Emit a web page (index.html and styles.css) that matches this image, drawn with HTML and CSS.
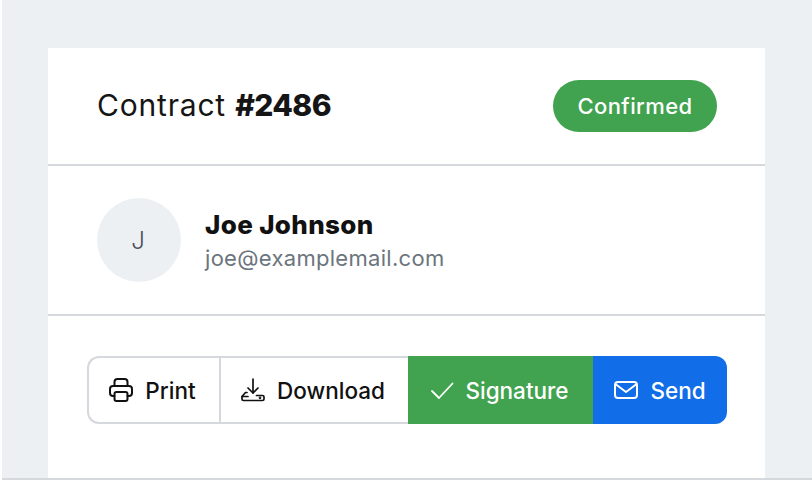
FILE: index.html
```html
<!DOCTYPE html>
<html lang="en">
<head>
<meta charset="utf-8">
<title>Contract #2486</title>
<link rel="stylesheet" href="styles.css">
</head>
<body>
<main class="page">
  <section class="card">
    <header class="head">
      <h1 class="title">Contract <b>#2486</b></h1>
      <span class="badge">Confirmed</span>
    </header>
    <div class="user">
      <div class="avatar">J</div>
      <div class="info">
        <div class="name">Joe Johnson</div>
        <div class="email">joe@examplemail.com</div>
      </div>
    </div>
    <div class="actions">
      <div class="group">
        <button class="btn btn-print">
          <svg class="icon" viewBox="0 0 24 24" fill="none" stroke="currentColor" stroke-width="2" stroke-linejoin="round" stroke-linecap="round"><path d="M5.500 8V4a3 3 0 0 1 3-3h7a3 3 0 0 1 3 3v4"/><path d="M5.500 18H4a3 3 0 0 1-3-3v-4a3 3 0 0 1 3-3h16a3 3 0 0 1 3 3v4a3 3 0 0 1-3 3h-1.500"/><rect x="5.500" y="14" width="13" height="9" rx="2"/></svg>
          Print
        </button>
        <button class="btn btn-download">
          <svg class="icon" viewBox="0 0 24 24" fill="none" stroke="currentColor" stroke-width="1.700" stroke-linejoin="round" stroke-linecap="round"><path d="M12 1v14"/><path d="M7 10l5 5 5-5"/><path d="M6 14.500H4.500L1 18.500V21a1.500 1.500 0 0 0 1.500 1.500h19A1.500 1.500 0 0 0 23 21v-2a1.500 1.500 0 0 0-1.500-1.500H15.500"/><path d="M1 18.500h6"/><circle cx="19" cy="19.800" r=".5"/></svg>
          Download
        </button>
        <button class="btn btn-sign">
          <svg class="icon" viewBox="0 0 24 24" fill="none" stroke="currentColor" stroke-width="1.800" stroke-linejoin="round" stroke-linecap="round"><path d="M2 13l7 7L22.500 5.500"/></svg>
          Signature
        </button>
        <button class="btn btn-send">
          <svg class="icon" viewBox="0 0 24 24" fill="none" stroke="currentColor" stroke-width="2" stroke-linejoin="round" stroke-linecap="round"><rect x="1" y="4" width="22" height="16" rx="3"/><path d="M2 6.500l10 7.500 10-7.500"/></svg>
          Send
        </button>
      </div>
    </div>
  </section>
</main>
</body>
</html>
```
FILE: styles.css
```css
* { box-sizing: border-box; }
html, body { margin: 0; height: 100%; background: #fff; overflow: hidden; }
body { font-family: "Inter", "Lato", sans-serif; color: #111; }
.page { height: 480px; margin-left: 2px; padding: 48px 47px 0 46px; background: #edf0f3; border-bottom: 2px solid #d5d8dc; }
.card { height: 430px; background: #fff; }
.head { height: 118px; padding: 32px 48px 32px 49px; display: flex; align-items: center; justify-content: space-between; border-bottom: 2px solid #d5d8dc; }
.title { margin: 0 0 2px; font-size: 30px; font-weight: 400; line-height: 50px; letter-spacing: 0.8px; color: #151515; }
.title b { font-weight: 800; letter-spacing: -0.6px; }
.badge { width: 164px; height: 52px; border-radius: 26px; background: #41a34f; color: #fff; font-size: 22px; font-weight: 500; letter-spacing: 0.4px; display: flex; align-items: center; justify-content: center; }
.user { height: 150px; padding: 32px 49px; display: flex; align-items: center; gap: 24px; border-bottom: 2px solid #d5d8dc; }
.avatar { width: 84px; height: 84px; border-radius: 50%; background: #edf0f3; color: #495057; font-size: 24px; font-weight: 300; padding-right: 2px; display: flex; align-items: center; justify-content: center; }
.info { display: flex; flex-direction: column; gap: 1px; padding-top: 1px; }
.name { font-size: 26px; font-weight: 800; line-height: 34px; letter-spacing: 0.35px; color: #111; }
.email { font-size: 22px; line-height: 30px; letter-spacing: 0.3px; color: #6c757d; }
.actions { padding: 40px 38px 0 39px; }
.group { display: flex; height: 68px; }
.btn { height: 68px; padding: 0 3px 0 0; display: flex; align-items: center; justify-content: center; gap: 12px; font: 500 22.5px "Inter", "Lato", sans-serif; border: 2px solid #d5d8dc; background: #fff; color: #111; }
.icon { width: 24px; height: 24px; flex: none; }
.btn-print { width: 132px; border-radius: 12px 0 0 12px; border-right: 0; }
.btn-download { width: 189px; border-right: 0; }
.btn-sign { width: 185px; padding-right: 2px; gap: 11px; background: #41a34f; border: 0; color: #fff; }
.btn-send { width: 134px; padding-right: 0; background: #126de8; border: 0; color: #fff; border-radius: 0 12px 12px 0; }
```
